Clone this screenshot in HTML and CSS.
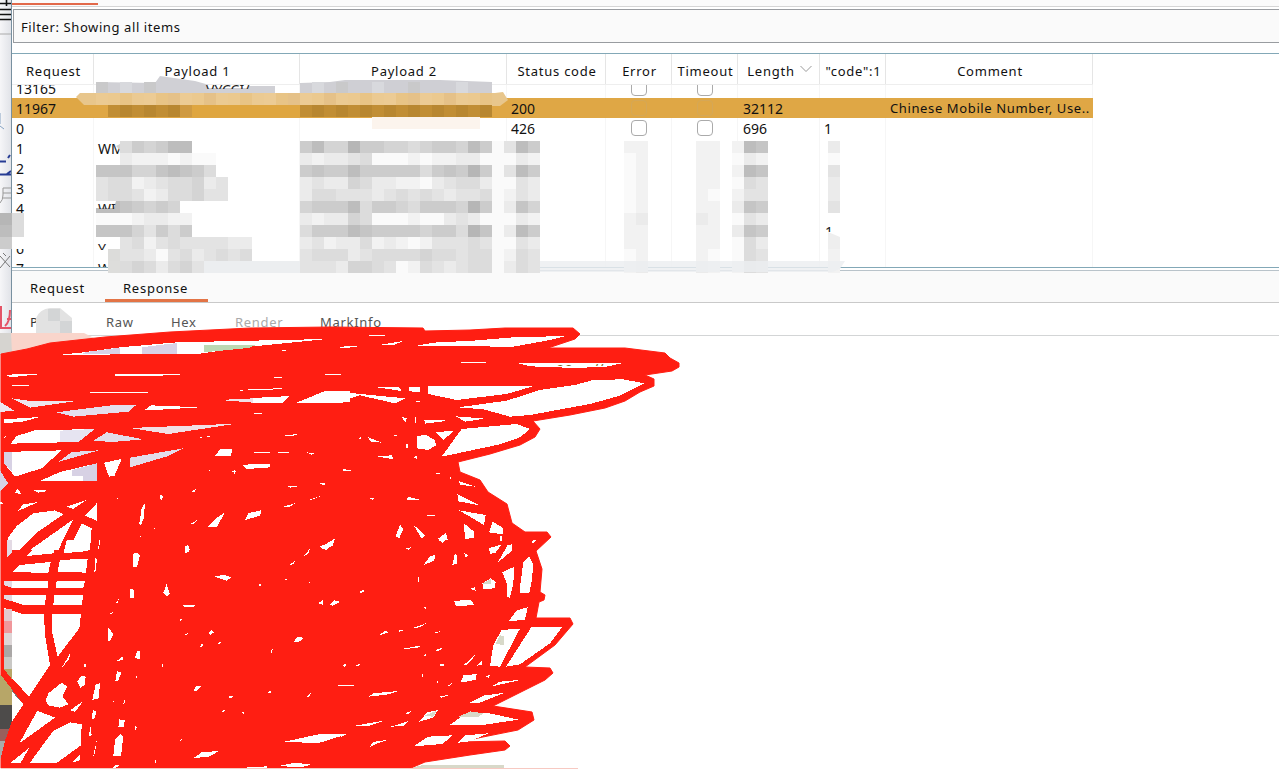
FILE: index.html
```html
<!DOCTYPE html>
<html lang="en">
<head>
<meta charset="utf-8">
<title>Intruder attack results</title>
<link rel="stylesheet" href="styles.css">
</head>
<body>
<div class="app">
  <aside class="behind">
    <svg width="11" height="769" viewBox="0 0 11 769">
      <path d="M0 3.5H11M6.5 0V6M0 9.500H11M0 14.500H11M0 19.500H11" stroke="#111" stroke-width="1.6"/>
      <path d="M0 34H11" stroke="#aaa"/>
      <path d="M0 113V124M0 126L4 129" stroke="#84a2c2" fill="none"/>
      <path d="M0 161.500H6M8 158L10 155M0 174.500H11M7 174L11 171" stroke="#273c94" stroke-width="2"/>
      <path d="M3 188V195Q3 200 0 203M3 188H11M3 193H11M3 198H11" stroke="#999" fill="none"/>
      <path d="M0 268L10 256M0 256L10 267M3 253L6 256" stroke="#777" fill="none"/>
      <path d="M1 306V328M5 326Q10 322 10 310M7 319H11M0 328H11" stroke="#e45467" stroke-width="2" fill="none"/>
    </svg>
  </aside>
  <main class="window">
    <div class="topline"><span class="topmark"></span></div>
    <div class="filter">Filter: Showing all items</div>
    <section class="table">
      <div class="row head"><span>Request</span><span>Payload 1</span><span>Payload 2</span><span>Status code</span><span>Error</span><span>Timeout</span><span>Length<svg class="sort" width="12" height="8" viewBox="0 0 12 8"><path d="M.5 1L6 6.500L11.500 1" fill="none" stroke="#999"/></svg></span><span>"code":1</span><span>Comment</span></div>
      <div class="rows">
        <div class="row first"><span>13165</span><span></span><span></span><span></span><span><i class="box"></i></span><span><i class="box"></i></span><span></span><span></span><span></span></div>
        <div class="row selected"><span>11967</span><span></span><span></span><span>200</span><span><i class="box"></i></span><span><i class="box"></i></span><span>32112</span><span></span><span>Chinese Mobile Number, Use..</span></div>
        <div class="row"><span>0</span><span></span><span></span><span>426</span><span><i class="box"></i></span><span><i class="box"></i></span><span>696</span><span>1</span><span></span></div>
        <div class="row"><span>1</span><span>WM</span><span></span><span></span><span></span><span></span><span></span><span></span><span></span></div>
        <div class="row"><span>2</span><span></span><span></span><span></span><span></span><span></span><span></span><span></span><span></span></div>
        <div class="row"><span>3</span><span></span><span></span><span></span><span></span><span></span><span></span><span></span><span></span></div>
        <div class="row"><span>4</span><span></span><span></span><span></span><span></span><span></span><span></span><span></span><span></span></div>
        <div class="row"><span></span><span></span><span></span><span></span><span></span><span></span><span></span><span></span><span></span></div>
        <div class="row"><span>6</span><span></span><span></span><span></span><span></span><span></span><span></span><span></span><span></span></div>
        <div class="row"><span>7</span><span>W</span><span></span><span></span><span></span><span></span><span></span><span></span><span></span></div>
      </div>
    </section>
    <div class="splitter"></div>
    <nav class="tabs"><span class="tab">Request</span><span class="tab active">Response</span></nav>
    <nav class="subtabs"><span class="pretty">P</span><span class="raw">Raw</span><span class="hex">Hex</span><span class="render">Render</span><span>MarkInfo</span></nav>
    <section class="response"></section>
  </main>
</div>

<svg class="overlay" width="1279" height="769" viewBox="0 0 1279 769">
  <defs>
    <clipPath id="cut-top"><rect x="205" y="85" width="60" height="4"/></clipPath>
    <clipPath id="cut-w4"><rect x="96" y="201" width="20" height="8"/></clipPath>
    <clipPath id="cut-y6"><rect x="96" y="244" width="11" height="6"/></clipPath>
    <clipPath id="cut-code"><rect x="825" y="227" width="9" height="5"/></clipPath>
    <clipPath id="cut-body"><rect x="550" y="360" width="60" height="6"/></clipPath>
  </defs>
  <path d="M155 83L160 76L195 81L213 86L275 86V94H96V82Z" fill="#d0d0d5"/>
  <path d="M300 83L330 82L345 80H440L492 82V94H300Z" fill="#cfcfd4"/>
  <path d="M116 146L122 143L130 146V155L122 152Z" fill="#d2d2cf"/>
  <g id="mosaic" shape-rendering="crispEdges"></g>
  <path d="M206 85H248V88H208Z" fill="#fff"/>
  <g clip-path="url(#cut-top)"><text class="fragment" x="206" y="95">VYCCI/</text></g>
  <path d="M76 97L80 93H96V105H84ZM492 93H495L503 92L508 100L500 106H492Z" fill="#e8c68c"/>
  <path d="M96 201H116L114 208H96Z" fill="#fff"/>
  <g clip-path="url(#cut-w4)"><text class="fragment" x="98" y="214">WI</text></g>
  <g clip-path="url(#cut-y6)"><text class="fragment" x="98" y="254">Y</text></g>
  <g clip-path="url(#cut-code)"><text class="fragment" x="825" y="237">1</text></g>
  <path d="M540 261H845L840 269L832 272H540Z" fill="#eceef0" opacity=".82"/>
  <path d="M828 232L840 237V249H828Z" fill="#eee"/>
  <path d="M36 318Q40 309 50 308H60L72 318V333H36Z" fill="#e2e2e2"/>
  <path d="M48 309H60V321H48ZM60 321H72V333H60Z" fill="#d3d5d6"/>
  <path d="M11 333H84L100 341L12 353Z" fill="#f9d5cb"/>

  <path class="ink" d="M1 354L27 349L50 343L105 337L170 332L250 328L330 327L423 328L425 331L470 330L505 328H573L580 334L575 339L560 344L548 348L625 348L665 353L670 358L679 363V367L672 371L645 375L654 379L654 386L640 392L625 401L605 408L570 415L533 421L540 429L535 437L520 445L490 454L458 462L460 472L480 480L488 492L507 504L512 523L525 532H547L551 537L536 551L542 569L540 592L545 595L544 600L539 602L536 618H570L573 624L555 645L525 667L550 668L553 673L545 680L493 706L532 712L534 720L518 730L458 742L505 741L510 746L505 750L470 755L425 762L411 768H1Z"/>

  <g fill="#fff" shape-rendering="crispEdges">
    <g transform="translate(0 320) scale(.33333)">
      <path d="M175 105L250 97L360 82L530 67L980 57L870 68L750 80L600 101Z"/>
      <path d="M260 96L360 83V102H245ZM425 82L530 69V102H425Z" fill="#d9d1e6"/>
      <path d="M612 75H770L745 84L612 97Z" fill="#bcd8b3"/>
      <path d="M12 168L40 163L125 162L40 171ZM35 195H88V198H35ZM270 216H445V219H270ZM345 163H540V166L345 168ZM715 211H730V213ZM745 207L845 205V208L745 210ZM822 172H845V174H822ZM960 164L1023 162V165H960ZM845 91H858V94H845ZM987 82L1050 79V83Z"/>
      <path d="M35 235L85 242L230 243L90 263ZM0 245L42 272L0 276Z" fill="#eee6ee"/>
      <path d="M168 277L350 254H410L385 275L220 290Z" fill="#e5deed"/>
      <path d="M435 269L453 256L600 262L465 270ZM12 298L120 291L65 306L12 309Z"/>
      <path d="M658 240L760 235V248ZM390 324L490 320L710 311L505 342Z" fill="#f2dfe5"/>
      <path d="M760 234L870 228L845 250H760ZM890 248L975 213H1050V245L1010 250Z"/>
      <path d="M32 371L50 348L105 331L285 327L235 366Z"/><path d="M180 332L285 327L235 366H180Z" fill="#e6e4f1"/>
      <path d="M277 364L320 337L430 358L350 365ZM175 426L215 396L297 391ZM390 413L550 385L505 408L390 442Z" fill="#e3dce9"/>
      <path d="M12 396L185 391L125 445L45 470L12 430ZM122 482L180 456L290 430V482ZM312 428L365 417L343 468L327 470Z"/>
      <path d="M12 396H36V456L12 430ZM216 450L290 430V482H250V468H216ZM0 452L25 490L0 514Z" fill="#d7d1e4"/>
      <path d="M100 510L150 512L115 518ZM45 520L52 505L64 521ZM52 574L70 553L115 546ZM200 560L258 541L220 567ZM255 587L290 550V602Z"/>
      <path d="M23 690V654L50 618L100 580L165 571L190 583L110 638L60 690ZM90 690L220 598L175 690ZM207 690L245 610L275 625L270 690Z"/>
      <path d="M645 407L662 386L697 388L693 407ZM725 434L810 432V442L740 447ZM762 396H810V400H762ZM835 396H866V400H835ZM920 397L942 400L935 404ZM850 347L893 342L880 348ZM760 280H790L775 283ZM860 498L908 497L870 503ZM955 489L982 491L970 495ZM925 540L960 529L940 538ZM850 560L887 549L870 560ZM1002 547L1025 541ZM1030 450H1050V454Z"/>
      <path d="M480 525L490 528L483 545ZM418 610L425 565L435 549L431 595L422 617ZM623 622L650 594L675 577L650 622ZM735 600L745 579L784 571L780 587ZM570 612L592 600L580 613ZM960 684L1005 655L998 674L980 690ZM810 660L830 646ZM855 657L870 650ZM295 690L297 650L300 668ZM555 690L562 678L570 690ZM575 514L590 506L582 518Z"/>
      <path d="M12 352L22 346L14 355ZM595 354L605 350V354ZM615 352L630 347V351ZM697 454H708V457H697ZM701 450H704V461H701ZM626 450H630V454H626ZM0 547L18 549L0 552ZM350 534H354V538H350ZM420 647H424V651H420ZM462 624H465V628H462Z"/>
    </g>
    <g transform="translate(340 320) scale(.33333)">
      <path d="M225 78L280 68L400 62L520 52L680 48L620 62L520 80ZM112 76L190 63L160 75ZM87 45H135V47H87ZM0 80L75 77L20 83ZM247 130L437 126V129Z"/>
      <path d="M535 130H845L800 140L705 144L570 139Z"/>
      <path d="M265 197H585L500 222L350 240L265 222ZM110 202H178L185 213ZM208 202H240V216L208 214Z"/>
      <path d="M355 262L500 242L600 210L705 195L760 180L850 178L912 190L840 227L750 252L570 285L510 290L430 268Z"/>
      <path d="M348 289L435 296L375 305ZM253 299L325 302L255 311ZM285 336L342 333L310 360ZM305 410L365 327L530 312L570 327L540 352L480 373Z"/>
      <path d="M230 350L255 344L282 358L290 375L265 390L232 385ZM85 352L125 368L90 364ZM110 409L155 406L160 418ZM185 291L200 294L196 308ZM0 216L195 235L165 250L60 226L0 245ZM220 243H242L240 247Z"/>
      <path d="M357 483L405 500L360 494ZM352 522L420 556L355 544ZM357 571L437 585L432 615ZM230 507L260 520ZM200 541L242 540L205 530ZM267 494L288 505ZM8 448L45 450L12 454ZM90 535L103 532L98 541Z"/>
      <path d="M372 610L402 635V653L375 658ZM447 637L458 604L490 625V643ZM220 614L255 645L245 656ZM167 648L180 614L190 628L177 656ZM295 655L318 639L323 660L300 664ZM90 655L102 645ZM575 662L590 660L578 670Z"/>
      <path d="M225 291H229V309H225ZM198 372H203V384H198ZM48 354L64 352V357ZM218 411L233 408L230 416ZM287 458H300V461H287ZM330 471H333V478H330ZM260 584H285V587H260ZM163 345H172V348H163ZM113 627L120 622ZM480 649H485V664H480Z"/>
    </g>
    <g transform="translate(0 540) scale(.33333)">
      <path d="M22 0H60L22 52ZM80 48L130 0H170L160 40ZM200 0H272L265 33L190 40ZM35 97L60 75L152 66L145 98ZM173 95L180 60L263 56L258 98ZM12 122H145V143H35L12 136ZM170 122H255L250 143H168ZM12 165H138L135 196L70 195L12 176ZM163 165H250L245 195H160Z"/>
      <path d="M12 204L65 221H132L135 285L150 375L87 470L12 388ZM155 221H243L238 265L173 350L155 270Z"/>
      <path d="M0 402L70 493L35 540L15 600L0 660Z" fill="#777"/>
      <path d="M36 455L70 493L36 545Z"/>
      <path d="M12 208H36V242H12Z" fill="#e3c9ce"/><path d="M12 242H36V280H12Z" fill="#f0979b"/><path d="M12 280H36V315H12Z" fill="#ddd6d7"/><path d="M12 315H36V350H12Z" fill="#aaa7a6"/><path d="M12 350H36V388H12Z" fill="#c9c8c5"/>
      <path d="M12 388H36V418ZM0 402L36 448V495H0Z" fill="#b7a668"/><path d="M0 495H36V543L28 567H0Z" fill="#4d4b4a"/><path d="M0 567H28L15 602H0Z" fill="#98605d"/>
      <path d="M0 602H15L5 645L0 660Z" fill="#aaa"/>
      <path d="M12 122H36V143L12 136ZM12 165H36V185L12 176ZM22 0H36V38L22 52Z" fill="#e3dae4"/>
      <path d="M137 482L145 460L185 428L202 440L187 468L205 493L180 503L145 496ZM232 425L245 406L257 410L254 434L242 444ZM185 383L213 336L205 361ZM150 420L167 403ZM215 474L228 456ZM210 511L250 483L225 516Z"/>
      <path d="M58 610L112 512L165 533ZM90 668L160 572L210 547L245 553L243 616L170 669ZM32 668L88 623L62 669ZM217 665L240 645L238 664ZM277 480L287 432L300 430L296 475ZM274 535L280 510L290 515L282 538ZM266 590L272 560L275 585ZM278 655L290 602L285 640Z"/>
      <path d="M340 648L345 600L360 582L370 590L363 648ZM355 562L358 538L374 541L372 562ZM333 687L347 674L358 676L343 687ZM398 82L400 42L412 37L420 46L411 80ZM391 148L400 145L403 174L391 175ZM490 158L500 132L509 160L500 170ZM324 262L340 282L330 303H324ZM346 422L351 394L364 397L354 425ZM404 354L413 331L421 333L420 358ZM352 362L367 348L369 361Z"/>
      <path d="M644 110L670 104L694 112L680 122ZM548 195L588 194L578 202H552ZM555 20L565 15L568 35L556 39ZM600 32L612 5ZM960 20L1003 0L998 17L980 27ZM912 48L930 26L925 41ZM955 190L970 179L968 194ZM990 194L1003 181L1020 185L998 198ZM880 307L892 291L912 293L895 307ZM580 450L590 438L603 438L588 455ZM625 278L635 270L643 277L630 285ZM600 320L605 310L612 319ZM810 337L818 326L817 338ZM685 470L705 467L690 475Z"/>
      <path d="M845 607L960 582L1040 583L960 608ZM580 655L605 637L657 633L630 649ZM700 685L800 679V684ZM835 678L885 668L935 674L900 682ZM1005 436L1050 435V439ZM663 513L677 509L670 516ZM803 457L816 451L810 460ZM868 75L885 63L880 73ZM920 470L933 458L926 472Z"/>
      <path d="M283 95L287 50L291 60L286 96ZM297 22L296 0H300ZM347 190L357 176L352 191ZM329 222L340 215L334 224ZM539 238L548 234L543 245ZM548 283L565 280L560 284ZM250 382L256 365L257 380ZM369 492L375 477L373 495ZM404 555L411 562L406 572ZM486 373H489V382H486ZM405 412L412 408V414ZM338 482H342V486H338ZM539 600L547 597L543 604ZM465 660H468V668H465ZM652 310L663 305L660 312ZM850 120L865 115L860 120ZM936 76L944 69ZM778 132H782V137H778ZM926 125H930V130H926ZM1025 378L1040 374L1036 380ZM725 516L736 519L730 521Z"/>
    </g>
    <g transform="translate(340 540) scale(.33333)">
      <path d="M447 24L485 14L465 40L450 41ZM473 68L503 15L517 13V31ZM487 97L523 80L520 130L510 173L500 170V130ZM540 142L550 65L568 50L580 75L575 125L568 159L540 160ZM507 243L530 211L563 202L555 240Z"/>
      <path d="M450 378L460 315L485 270L540 266L480 380ZM498 380L575 260H668L630 310L540 373Z"/>
      <path d="M427 130L452 115L467 125L465 145L430 147ZM342 183L392 179L403 195L348 199ZM390 147L405 142L407 152ZM250 75L270 50L285 44L283 62ZM337 75L345 40L351 45V70ZM372 38L385 46L377 52ZM197 24L214 22L205 30ZM386 76L400 67ZM430 75L443 64ZM58 157L68 149L73 153L63 160Z"/>
      <path d="M117 286L135 272L147 277ZM174 269L190 271L178 275ZM218 264L258 250L240 262ZM190 326L245 316L230 325ZM285 331L312 321L295 334ZM286 376L312 371V377ZM370 376L412 339L380 376ZM410 377L427 360V375ZM362 428L370 406L410 402L408 419ZM437 410L451 403L446 413ZM452 440L480 425L545 419ZM385 490L430 467L495 458L415 490ZM298 470L330 464L305 473Z"/>
      <path d="M328 556L375 522L440 518L535 539L435 554ZM237 545L262 517L294 510L280 533ZM85 470L100 460L177 453L140 464ZM0 434L58 434L35 438ZM45 557L137 541L90 557ZM153 560L205 543L190 558ZM220 619L265 590L337 586L308 612ZM355 608L375 586L445 580L390 604ZM88 622L100 606L145 599L115 609ZM193 520L215 513L205 521Z"/>
      <path d="M355 531L390 514L430 520L415 530ZM467 312L480 285L492 290V315ZM250 528L290 512L280 530ZM230 680L250 675H492V685H215ZM430 128L452 117V132H430Z" fill="#d8d9c9"/>
      <path d="M295 0L315 2L308 8ZM234 112H238V125H234ZM252 201L260 203L257 208ZM284 277L305 273L290 279ZM247 346L258 342V347ZM323 437L337 429L330 438ZM45 376L60 372L55 378ZM5 376L18 372V377ZM175 140L185 135ZM0 588L22 582L5 590ZM290 423H294V428H290ZM245 403H248V411H245Z"/>
    </g>
  </g>
  <path d="M1 768.500H578" stroke="#f7c9c2"/>
  <g clip-path="url(#cut-body)"><text class="fragment brown" x="556" y="373">oo</text><text class="fragment brown" x="593" y="374">//</text></g>
</svg>
<script src="mosaic.js"></script>
</body>
</html>
```
FILE: styles.css
```css
* { box-sizing: border-box; }
body { margin: 0; overflow: hidden; background: #fff; color: #111; font: 14px/20px "Noto Sans", sans-serif; }
.app { display: flex; width: 1279px; height: 769px; }
.behind { width: 11px; background: linear-gradient(90deg, #f6f6f8, #e1e3e8); }
.behind svg { display: block; }
.window { width: 1268px; border-left: 1px solid #7890a0; display: flex; flex-direction: column; background: #fff; }
.topline { height: 7px; padding-top: 3px; border-bottom: 1px solid #d5d5d5; background: #fafafa; }
.topmark { display: block; width: 86px; height: 2px; background: #e2694a; }
.filter { height: 34px; margin: 2px 0 10px 1px; padding: 8px 7px; line-height: 18px; background: #fafafa; border: 1px solid #999ca0; border-right: 0; font-size: 13px; letter-spacing: .6px; }
.table { height: 215px; border-top: 1px solid #83a8b7; border-bottom: 1px solid #83a8b7; overflow: hidden; }
.row { display: grid; grid-template-columns: 82px 206px 207px 99px 66px 66px 82px 66px 207px; width: 1081px; height: 20px; }
.row > span { padding-left: 4px; border-right: 1px solid #f6f6f6; white-space: nowrap; overflow: hidden; line-height: 21px; }
.row > span:last-child { font-size: 13px; letter-spacing: .62px; }
.row > span:nth-child(7) { padding-left: 5px; }
.row.head { height: 31px; border-bottom: 1px solid #eee; }
.row.head > span { padding: 8px 0 0 2px; text-align: center; border-color: #e5e5e5; font-size: 13px; letter-spacing: .75px; line-height: 19px; }
.sort { margin: 0 0 3px 5px; }
.rows { height: 182px; overflow: hidden; }
.first { margin-top: -7px; }
.selected { background: #dfa745; }
.selected > span { border-color: transparent; }
.box { display: block; width: 16px; height: 16px; margin: 2px 0 0 21px; border: 1px solid #aaa; border-radius: 4px; background: #fff; }
.selected .box { background: transparent; border-color: #d5a757; }
.splitter { height: 3px; border-bottom: 1px solid #b9c3ca; }
.tabs { height: 32px; display: flex; background: #fafafa; border-bottom: 1px solid #c9c9c9; font-size: 13px; }
.tab { margin-left: 6px; padding: 7px 8px 0 12px; letter-spacing: .75px; width: 76px; }
.tab.active { width: 103px; margin-left: 11px; padding-left: 18px; border-bottom: 3px solid #e37446; }
.subtabs { display: flex; height: 33px; padding: 9px 0 0 18px; border-bottom: 1px solid #d3d5d6; color: #555; font-size: 13px; letter-spacing: .7px; }
.pretty { width: 76px; color: #333; }
.raw { width: 65px; }
.hex { width: 64px; }
.render { width: 85px; color: #aaa; }
.response { flex: 1; }
.overlay { position: absolute; left: 0; top: 0; }
.ink { fill: #ff1e12; stroke: #ff1e12; stroke-linejoin: round; }
.fragment { font: 14px "Noto Sans", sans-serif; fill: #222; }
.brown { fill: #806820; }
```
FILE: mosaic.js
```js
const mosaic = document.getElementById('mosaic');
const cell = (x, y, fill, w = 12, h = 12) => {
  const r = document.createElementNS('http://www.w3.org/2000/svg', 'rect');
  for (const [k, v] of Object.entries({ x, y, width: w, height: h, fill })) r.setAttribute(k, v);
  mosaic.appendChild(r);
};
// Each hex digit is one 12px grey cell, "." leaves the cell empty.
const block = (x, y, lines) => lines.forEach((line, j) => [...line].forEach((c, i) => {
  if (c === '.') return;
  const v = 136 + parseInt(c, 16) * 7.6;
  cell(x + i * 12, y + j * 12, `rgb(${v},${v},${v})`);
}));
block(96, 141, ['...9a977a', '..deeefeff', '888aa8789b', 'cbbedcbbadc', 'cbbcedbbacc', '7789a9a', 'fffeddee', '888ac9b9', '.cbecbccccdd', '.ccdfcbdcbcb', '..babdbac'].map((s, i) => i === 0 ? s.replace('...9', '..b9').slice(0, 8) : i === 8 ? '.' + s : i === 9 ? '.' + s : s));
cell(108, 249, '#dcdcda');
cell(108, 261, '#dddddb');
for (let x = 204; x < 300; x += 12) cell(x, 261, '#eceef0');
block(300, 141, ['97aa699aaba99a79', 'deddcbfffefeeddf', '9899799999b98969', 'dcddabddeefdcbbd', 'dbbcccdcbcbcdccb', 'a9997b99ab999a69', 'deddabfffeffdcdf', 'b999789999a99b68', 'dceddbedefecccbc', 'cbbbdcbbbbabbcbb', 'cccdaabcfebcdcbb']);
block(492, 141, ['fc79', 'ffde', 'fc79', 'ffcd', 'fecd', 'fd8a', 'ffde', 'fd79', 'ffcd', 'febc', 'fdbc']);
block(624, 141, ['ee', 'fe', 'fe', 'fe', 'fe', 'fe', 'ed', 'ee', 'ee', 'fe', 'ed']);
block(696, 141, ['ee', 'ee', 'ee', 'ee', 'ef', 'ee', 'de', 'ee', 'ee', 'ef', 'de']);
block(732, 141, ['e78', 'fde', 'e78', 'fbc', 'ecc', 'd89', 'fcd', 'd89', 'fbd', 'fbc', 'ebc']);
block(828, 141, ['d', 'f', 'c', 'd', 'd', 'c', '.', '.', 'f', 'e', 'e']);
block(0, 213, ['6b', '7b', '9c']);
cell(12, 237, '#fff', 12, 12);
cell(0, 333, '#d6d4d0', 12, 22);
const light = ['#ebca92', '#e8c486', '#eccb94', '#e5c188', '#ebc98f'];
const dark = ['#d79e3f', '#b88731', '#bd8b34', '#c18e35', '#b8872e'];
for (let i = 0; i < 33; i++) cell(96 + i * 12, 93, light[(i * 3 + i % 2) % 5]);
for (let i = 1; i < 33; i++) {
  const x = 96 + i * 12;
  const fill = x >= 192 && x < 300 ? '#dfa640' : x === 180 ? '#cf9a42' : dark[1 + (i * 2 % 4)];
  cell(x, 105, fill);
}
[96, 120, 144, 312, 336, 372, 408, 456].forEach((x, i) => cell(x, 82, i % 2 ? '#d8d9dd' : '#c9c9ca', 12, 11));
cell(372, 117, '#fcf4ed', 108, 12);
```
